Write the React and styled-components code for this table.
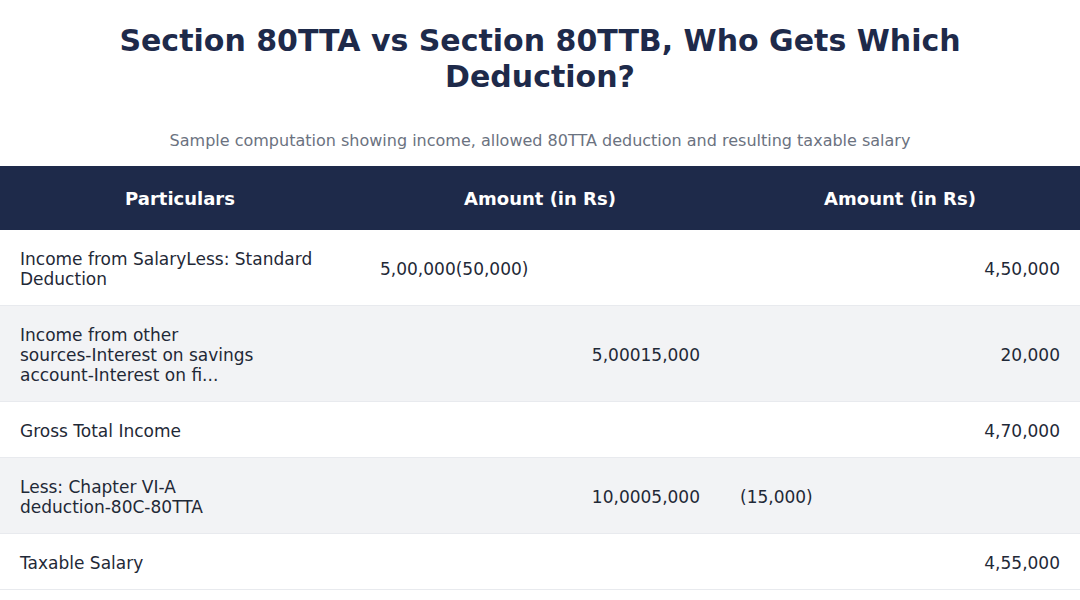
import React from "react";
import styled, { createGlobalStyle } from "styled-components";

const GlobalStyle = createGlobalStyle`
  body {
    margin: 0;
    background: #ffffff;
    font-family: "DejaVu Sans", Verdana, sans-serif;
  }
`;

const Page = styled.div`
  padding-top: 22.5px;
`;

const Title = styled.h1`
  margin: 0;
  padding: 0 40px;
  font-size: 30px;
  line-height: 36px;
  font-weight: bold;
  color: #1e2a4a;
  text-align: center;
`;

const Subtitle = styled.p`
  margin: 36px 0 15.5px;
  font-size: 16px;
  line-height: 20px;
  color: #6b7280;
  text-align: center;
`;

const Table = styled.table`
  width: 100%;
  border-collapse: collapse;
  table-layout: fixed;
`;

const HeadCell = styled.th`
  background: #1e2a4a;
  color: #ffffff;
  font-size: 18px;
  line-height: 20px;
  font-weight: bold;
  padding: 23px 20px 21px;
  text-align: center;
`;

const Row = styled.tr`
  background: ${(p) => (p.$striped ? "#f2f3f5" : "#ffffff")};
  border-bottom: 1px solid #e8eaee;
`;

const Cell = styled.td`
  padding: 18.5px 20px 16.5px;
  font-size: 17px;
  line-height: 20px;
  color: #1f2937;
  vertical-align: middle;
  text-align: ${(p) => p.$align || "left"};
`;

const Label = styled.div`
  max-width: 296px;
`;

const NoWrap = styled.span`
  white-space: nowrap;
`;

const rows = [
  {
    label: "Income from SalaryLess: Standard Deduction",
    mid: "5,00,000(50,000)",
    midAlign: "left",
    last: "4,50,000",
    lastAlign: "right",
  },
  {
    label: "Income from other sources-Interest on savings account-Interest on fi...",
    mid: "5,00015,000",
    midAlign: "right",
    last: "20,000",
    lastAlign: "right",
  },
  { label: "Gross Total Income", mid: "", last: "4,70,000", lastAlign: "right" },
  {
    label: "Less: Chapter VI-A deduction-80C-80TTA",
    mid: "10,0005,000",
    midAlign: "right",
    last: "(15,000)",
    lastAlign: "left",
  },
  { label: "Taxable Salary", mid: "", last: "4,55,000", lastAlign: "right" },
];

// keep hyphenated words together, as the source table does
const wrapWords = (text) =>
  text.split(" ").map((word, i) => (
    <React.Fragment key={i}>
      {i > 0 && " "}
      {word.includes("-") ? <NoWrap>{word}</NoWrap> : word}
    </React.Fragment>
  ));

const App = () => {
  return (
    <Page>
      <GlobalStyle />
      <Title>Section 80TTA vs Section 80TTB, Who Gets Which Deduction?</Title>
      <Subtitle>
        Sample computation showing income, allowed 80TTA deduction and resulting taxable salary
      </Subtitle>
      <Table>
        <thead>
          <tr>
            <HeadCell>Particulars</HeadCell>
            <HeadCell>Amount (in Rs)</HeadCell>
            <HeadCell>Amount (in Rs)</HeadCell>
          </tr>
        </thead>
        <tbody>
          {rows.map((row, i) => (
            <Row key={row.label} $striped={i % 2 === 1}>
              <Cell>
                <Label>{wrapWords(row.label)}</Label>
              </Cell>
              <Cell $align={row.midAlign}>{row.mid}</Cell>
              <Cell $align={row.lastAlign}>{row.last}</Cell>
            </Row>
          ))}
        </tbody>
      </Table>
    </Page>
  );
};

export default App;
